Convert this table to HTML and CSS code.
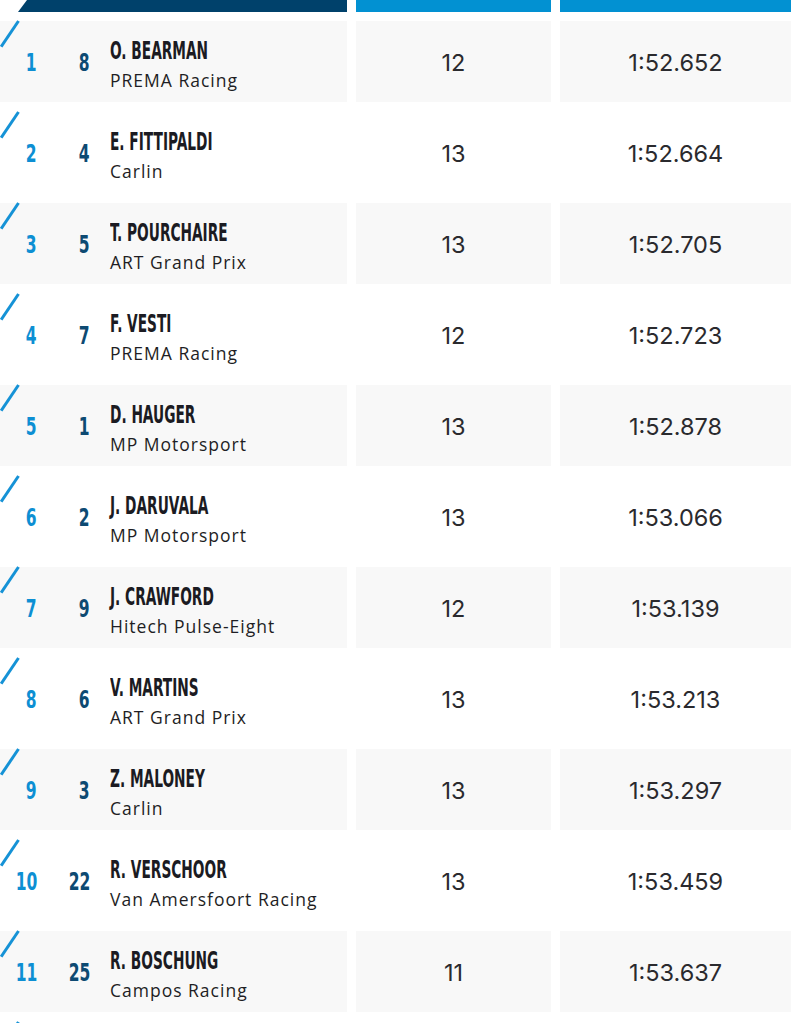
FILE: index.html
```html
<!DOCTYPE html>
<html>
<head>
<meta charset="utf-8">
<link rel="stylesheet" href="styles.css">
</head>
<body>
<div class="table">
  <div class="head">
    <div class="h h-driver"></div>
    <div class="h h-blue"></div>
    <div class="h h-blue"></div>
  </div>

  <div class="row">
    <div class="cell driver"><span class="slash"></span><span class="pos"><span class="sq">1</span></span><span class="num"><span class="sq">8</span></span><div class="who"><div class="name"><span class="sqn">O. BEARMAN</span></div><div class="team">PREMA Racing</div></div></div>
    <div class="cell val">12</div>
    <div class="cell val">1:52.652</div>
  </div>
  <div class="row alt">
    <div class="cell driver"><span class="slash"></span><span class="pos"><span class="sq">2</span></span><span class="num"><span class="sq">4</span></span><div class="who"><div class="name"><span class="sqn">E. FITTIPALDI</span></div><div class="team">Carlin</div></div></div>
    <div class="cell val">13</div>
    <div class="cell val">1:52.664</div>
  </div>
  <div class="row">
    <div class="cell driver"><span class="slash"></span><span class="pos"><span class="sq">3</span></span><span class="num"><span class="sq">5</span></span><div class="who"><div class="name"><span class="sqn">T. POURCHAIRE</span></div><div class="team">ART Grand Prix</div></div></div>
    <div class="cell val">13</div>
    <div class="cell val">1:52.705</div>
  </div>
  <div class="row alt">
    <div class="cell driver"><span class="slash"></span><span class="pos"><span class="sq">4</span></span><span class="num"><span class="sq">7</span></span><div class="who"><div class="name"><span class="sqn">F. VESTI</span></div><div class="team">PREMA Racing</div></div></div>
    <div class="cell val">12</div>
    <div class="cell val">1:52.723</div>
  </div>
  <div class="row">
    <div class="cell driver"><span class="slash"></span><span class="pos"><span class="sq">5</span></span><span class="num"><span class="sq">1</span></span><div class="who"><div class="name"><span class="sqn">D. HAUGER</span></div><div class="team">MP Motorsport</div></div></div>
    <div class="cell val">13</div>
    <div class="cell val">1:52.878</div>
  </div>
  <div class="row alt">
    <div class="cell driver"><span class="slash"></span><span class="pos"><span class="sq">6</span></span><span class="num"><span class="sq">2</span></span><div class="who"><div class="name"><span class="sqn">J. DARUVALA</span></div><div class="team">MP Motorsport</div></div></div>
    <div class="cell val">13</div>
    <div class="cell val">1:53.066</div>
  </div>
  <div class="row">
    <div class="cell driver"><span class="slash"></span><span class="pos"><span class="sq">7</span></span><span class="num"><span class="sq">9</span></span><div class="who"><div class="name"><span class="sqn">J. CRAWFORD</span></div><div class="team">Hitech Pulse-Eight</div></div></div>
    <div class="cell val">12</div>
    <div class="cell val">1:53.139</div>
  </div>
  <div class="row alt">
    <div class="cell driver"><span class="slash"></span><span class="pos"><span class="sq">8</span></span><span class="num"><span class="sq">6</span></span><div class="who"><div class="name"><span class="sqn">V. MARTINS</span></div><div class="team">ART Grand Prix</div></div></div>
    <div class="cell val">13</div>
    <div class="cell val">1:53.213</div>
  </div>
  <div class="row">
    <div class="cell driver"><span class="slash"></span><span class="pos"><span class="sq">9</span></span><span class="num"><span class="sq">3</span></span><div class="who"><div class="name"><span class="sqn">Z. MALONEY</span></div><div class="team">Carlin</div></div></div>
    <div class="cell val">13</div>
    <div class="cell val">1:53.297</div>
  </div>
  <div class="row alt">
    <div class="cell driver"><span class="slash"></span><span class="pos"><span class="sq">10</span></span><span class="num"><span class="sq">22</span></span><div class="who"><div class="name"><span class="sqn">R. VERSCHOOR</span></div><div class="team">Van Amersfoort Racing</div></div></div>
    <div class="cell val">13</div>
    <div class="cell val">1:53.459</div>
  </div>
  <div class="row">
    <div class="cell driver"><span class="slash"></span><span class="pos"><span class="sq">11</span></span><span class="num"><span class="sq">25</span></span><div class="who"><div class="name"><span class="sqn">R. BOSCHUNG</span></div><div class="team">Campos Racing</div></div></div>
    <div class="cell val">11</div>
    <div class="cell val">1:53.637</div>
  </div>
  <div class="row alt">
    <div class="cell driver"><span class="slash"></span></div>
    <div class="cell val"></div>
    <div class="cell val"></div>
  </div>
</div>
</body>
</html>
```

FILE: styles.css
```css
html, body {
  margin: 0;
  padding: 0;
  background: #ffffff;
}
body {
  overflow: hidden;
  height: 1023px;
}
.table {
  display: flex;
  flex-direction: column;
  gap: 10px;
  width: 791px;
}
.head {
  display: grid;
  grid-template-columns: 347px 195px 231px;
  column-gap: 9px;
  height: 12px;
  margin-bottom: -1px;
}
.h-driver {
  background: #00416b;
  clip-path: polygon(27px 0, 100% 0, 100% 100%, 18px 100%);
}
.h-blue {
  background: #0291d2;
}
.row {
  display: grid;
  grid-template-columns: 347px 195px 231px;
  column-gap: 9px;
  height: 81px;
}
.cell {
  background: #f8f8f8;
}
.row.alt .cell {
  background: #ffffff;
}
.driver {
  position: relative;
  display: flex;
  align-items: center;
}
.slash {
  position: absolute;
  left: -2px;
  top: 0;
  width: 3px;
  height: 31px;
  background: #1592d6;
  transform-origin: 50% 0;
  transform: translateX(19px) rotate(34deg);
}
.pos, .num {
  font-family: "DejaVu Sans Condensed", sans-serif;
  font-weight: 700;
  font-size: 25px;
  line-height: 1;
  text-align: right;
  display: inline-block;
  padding-top: 2px;
}
.pos {
  width: 37px;
  color: #0d8fd3;
}
.num {
  width: 53px;
  color: #0d4a72;
}
.sq {
  display: inline-block;
  transform: scaleX(0.69);
  transform-origin: 100% 50%;
}
.who {
  margin-left: 20px;
  display: flex;
  flex-direction: column;
  padding-top: 7px;
}
.name {
  font-family: "DejaVu Sans Condensed", sans-serif;
  font-weight: 700;
  font-size: 25px;
  line-height: 26px;
  color: #1b1b22;
  white-space: nowrap;
}
.sqn {
  display: inline-block;
  transform: scaleX(0.61);
  transform-origin: 0 50%;
}
.team {
  margin-top: 4px;
  font-family: "Open Sans", sans-serif;
  font-weight: 500;
  font-size: 17.5px;
  letter-spacing: 1px;
  line-height: 24px;
  color: #1e1e24;
  white-space: nowrap;
}
.val {
  display: flex;
  align-items: center;
  justify-content: center;
  font-family: "Inter", sans-serif;
  font-size: 23.5px;
  color: #2a2a2e;
  padding-top: 2px;
  box-sizing: border-box;
}
```
